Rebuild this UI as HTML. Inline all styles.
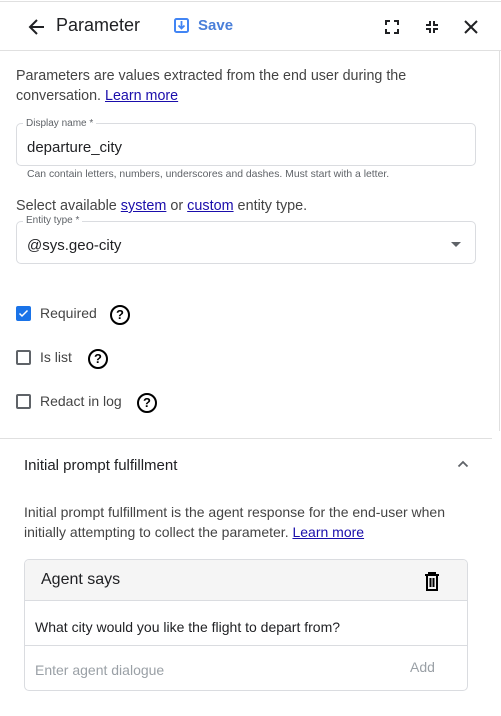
<!DOCTYPE html>
<html><head><style>
*{margin:0;padding:0;box-sizing:border-box}
body{width:501px;height:716px;background:#fff;font-family:"Liberation Sans",Arial,sans-serif;color:#3c4043;position:relative;overflow:hidden}
.a{position:absolute;white-space:nowrap}
a{color:#1a0dab;text-decoration:underline}
.box{position:absolute;border:1px solid #dadce0;border-radius:5px}
.lbl{position:absolute;background:#fff;font-size:10px;color:#5f6368;padding:0 3px;line-height:12px}
.cb{position:absolute;width:15px;height:15px;border:2px solid #5f6368;border-radius:2px}
.help{position:absolute;width:20px;height:20px;border:2px solid #000;border-radius:50%;font-size:13px;font-weight:bold;color:#000;text-align:center;line-height:16px}
</style></head><body>
<div style="position:absolute;left:0;top:1px;width:501px;height:1px;background:#e0e0e0"></div>
<div style="position:absolute;left:0;top:50px;width:501px;height:1px;background:#e0e0e0"></div>
<div style="position:absolute;left:499px;top:51px;width:1px;height:380px;background:#e0e0e0"></div>
<svg class="a" style="left:27px;top:17px" width="20" height="20" viewBox="0 0 20 20"><path d="M17 10H4M10 3L3 10L10 17" stroke="#202124" stroke-width="2" fill="none"/></svg>
<div class="a" style="left:56px;top:15px;font-size:18px;color:#202124">Parameter</div>
<svg class="a" style="left:174px;top:18px" width="15" height="15" viewBox="0 0 15 15"><rect x="1" y="1" width="13" height="13" rx="1.5" stroke="#4285f4" stroke-width="2" fill="none"/><path d="M7.5 3v7M4.5 7.5l3 3 3-3" stroke="#4285f4" stroke-width="1.8" fill="none"/></svg>
<div class="a" style="left:198px;top:17px;font-size:15px;font-weight:bold;color:#4a7fd9">Save</div>
<svg class="a" style="left:385px;top:20px" width="14" height="14" viewBox="0 0 14 14"><path d="M1 5V1h4M9 1h4v4M13 9v4H9M5 13H1V9" stroke="#202124" stroke-width="2" fill="none"/></svg>
<svg class="a" style="left:425px;top:20px" width="14" height="14" viewBox="0 0 14 14"><path d="M1 5h4V1M9 1v4h4M13 9H9v4M5 13V9H1" stroke="#202124" stroke-width="2" fill="none"/></svg>
<svg class="a" style="left:464px;top:20px" width="14" height="14" viewBox="0 0 14 14"><path d="M1 1l12 12M13 1L1 13" stroke="#202124" stroke-width="2"/></svg>

<div class="a" style="left:16px;top:66px;font-size:14.3px;line-height:20px;color:#444">Parameters are values extracted from the end user during the<br>conversation. <a>Learn more</a></div>

<div class="box" style="left:16px;top:123px;width:460px;height:43px"></div>
<div class="lbl" style="left:23px;top:118px">Display name *</div>
<div class="a" style="left:27px;top:139px;font-size:15px;color:#202124">departure_city</div>
<div class="a" style="left:27px;top:169px;font-size:10.4px;color:#5f6368">Can contain letters, numbers, underscores and dashes. Must start with a letter.</div>

<div class="a" style="left:16px;top:198px;font-size:14.4px;color:#444">Select available <a>system</a> or <a>custom</a> entity type.</div>
<div class="box" style="left:16px;top:221px;width:460px;height:43px"></div>
<div class="lbl" style="left:23px;top:215px">Entity type *</div>
<div class="a" style="left:27px;top:237px;font-size:15px;color:#202124">@sys.geo-city</div>
<div class="a" style="left:451px;top:242px;width:0;height:0;border-left:5px solid transparent;border-right:5px solid transparent;border-top:5px solid #5f6368"></div>

<div class="cb" style="left:16px;top:306px;background:#1a73e8;border-color:#1a73e8"><svg style="position:absolute;left:0;top:0" width="11" height="11" viewBox="0 0 11 11"><path d="M1.5 5.5l2.5 2.5 5.5-5.5" stroke="#fff" stroke-width="1.5" fill="none"/></svg></div>
<div class="a" style="left:40px;top:305px;font-size:14px;color:#444">Required</div>
<div class="help" style="left:110px;top:305px">?</div>
<div class="cb" style="left:16px;top:350px"></div>
<div class="a" style="left:40px;top:349px;font-size:14px;color:#444">Is list</div>
<div class="help" style="left:88px;top:349px">?</div>
<div class="cb" style="left:16px;top:394px"></div>
<div class="a" style="left:40px;top:393px;font-size:14px;color:#444">Redact in log</div>
<div class="help" style="left:137px;top:393px">?</div>

<div style="position:absolute;left:0;top:438px;width:492px;height:1px;background:#e0e0e0"></div>
<div class="a" style="left:24px;top:457px;font-size:15px;color:#202124;font-weight:500">Initial prompt fulfillment</div>
<svg class="a" style="left:457px;top:460px" width="12" height="8" viewBox="0 0 12 8"><path d="M1.5 6.5L6 2l4.5 4.5" stroke="#5f6368" stroke-width="1.8" fill="none"/></svg>
<div class="a" style="left:24px;top:502px;font-size:14px;line-height:20px;color:#444">Initial prompt fulfillment is the agent response for the end-user when<br>initially attempting to collect the parameter. <a>Learn more</a></div>

<div class="box" style="left:24px;top:559px;width:444px;height:132px;overflow:hidden">
<div style="position:absolute;left:0;top:0;width:100%;height:41px;background:#f5f5f5;border-bottom:1px solid #dadce0"></div>
<div class="a" style="left:16px;top:11px;font-size:16px;color:#202124">Agent says</div>
<svg class="a" style="left:399px;top:12px" width="16" height="19" viewBox="0 0 16 19"><path d="M1 3h14M5 3V1h6v2M3 3v15h10V3M6.5 6v9M9.5 6v9" stroke="#000" stroke-width="2" fill="none"/></svg>
<div class="a" style="left:10px;top:59px;font-size:14px;color:#202124">What city would you like the flight to depart from?</div>
<div style="position:absolute;left:0;top:85px;width:100%;height:1px;background:#dadce0"></div>
<div class="a" style="left:10px;top:102px;font-size:14px;color:#9aa0a6">Enter agent dialogue</div>
<div class="a" style="left:385px;top:99px;font-size:14px;color:#9aa0a6">Add</div>
</div>
</body></html>
